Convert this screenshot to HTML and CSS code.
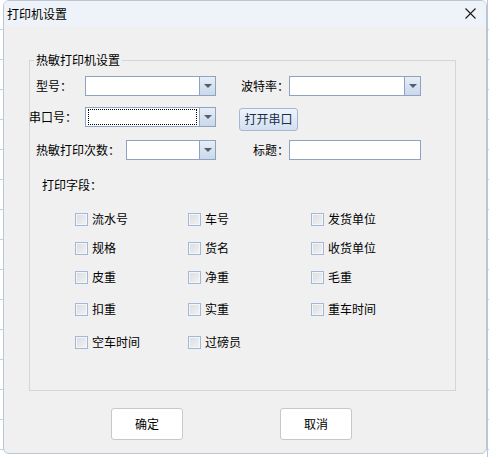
FILE: index.html
```html
<!DOCTYPE html>
<html lang="zh">
<head>
<meta charset="utf-8">
<title>打印机设置</title>
<link rel="stylesheet" href="styles.css">
</head>
<body>
<div class="win">
  <div class="titlebar">
    <span class="title">打印机设置</span>
    <svg class="close" width="11" height="11" viewBox="0 0 11 11"><path d="M0.5 0.5 L10.5 10.5 M10.5 0.5 L0.5 10.5" stroke="#1a1a1a" stroke-width="1.1" fill="none"/></svg>
  </div>
  <div class="content">
    <fieldset class="group">
      <legend>热敏打印机设置</legend>
      <div class="row r1">
        <div class="lcell"><span>型号：</span><div class="combo w131"><div class="field"></div><div class="arrow"><i></i></div></div></div>
        <div class="rcell"><span class="rlabel">波特率：</span><div class="combo w132"><div class="field"></div><div class="arrow"><i></i></div></div></div>
      </div>
      <div class="row r2">
        <div class="lcell wide"><span>串口号：</span><div class="combo w131 focus"><div class="field"><span class="dots"></span></div><div class="arrow"><i></i></div></div></div>
        <div class="rcell"><button class="open">打开串口</button></div>
      </div>
      <div class="row r3">
        <div class="lcell"><span>热敏打印次数：</span><div class="combo w90"><div class="field"></div><div class="arrow"><i></i></div></div></div>
        <div class="rcell"><span class="rlabel">标题：</span><div class="text w132"></div></div>
      </div>
      <div class="fields-label">打印字段：</div>
      <div class="cbrow c1">
        <label class="cb col1"><span class="box"></span>流水号</label>
        <label class="cb col2"><span class="box"></span>车号</label>
        <label class="cb"><span class="box"></span>发货单位</label>
      </div>
      <div class="cbrow c2">
        <label class="cb col1"><span class="box"></span>规格</label>
        <label class="cb col2"><span class="box"></span>货名</label>
        <label class="cb"><span class="box"></span>收货单位</label>
      </div>
      <div class="cbrow c3">
        <label class="cb col1"><span class="box"></span>皮重</label>
        <label class="cb col2"><span class="box"></span>净重</label>
        <label class="cb"><span class="box"></span>毛重</label>
      </div>
      <div class="cbrow c4">
        <label class="cb col1"><span class="box"></span>扣重</label>
        <label class="cb col2"><span class="box"></span>实重</label>
        <label class="cb"><span class="box"></span>重车时间</label>
      </div>
      <div class="cbrow c5">
        <label class="cb col1"><span class="box"></span>空车时间</label>
        <label class="cb col2"><span class="box"></span>过磅员</label>
      </div>
    </fieldset>
    <div class="actions">
      <button class="btn ok">确定</button>
      <button class="btn cancel">取消</button>
    </div>
  </div>
</div>
</body>
</html>
```
FILE: styles.css
```css
* { box-sizing: border-box; }
html, body { margin: 0; padding: 0; }
body {
  width: 489px;
  height: 457px;
  overflow: hidden;
  font-family: "Noto Sans CJK SC", "Noto Sans", sans-serif;
  font-size: 12px;
  line-height: 16px;
  color: #000;
  background:
    linear-gradient(to right, transparent 0 487px, #b7c6da 487px 488px, transparent 488px),
    repeating-linear-gradient(to bottom, #ffffff 0 29px, #c3d1e4 29px 30px);
}
.win {
  margin-left: 3px;
  width: 484px;
  height: 454px;
  border: 1px solid #bcc6d1;
  border-radius: 6px;
  background: #f0f0f0;
  overflow: hidden;
}
.titlebar {
  height: 25px;
  background: #edf3f8;
  display: flex;
  align-items: center;
  justify-content: space-between;
  padding: 0 10px 0 3px;
}
.title { font-size: 12px; line-height: 16px; }
.close { display: block; }
.content { padding: 0; }
.group {
  margin: 26px 0 0 25px;
  width: 427px;
  padding: 0 0 40px 0;
  border: 1px solid #d5d5d5;
  min-width: 0;
}
.group legend {
  margin-left: 4px;
  padding: 0 2px;
  line-height: 16px;
}
.row {
  display: flex;
  align-items: flex-start;
  height: 20px;
}
.r1 { margin-top: 8px; }
.r2 { margin-top: 11px; }
.r3 { margin-top: 13px; }
.lcell {
  margin-left: 6px;
  width: 180px;
  height: 20px;
  display: flex;
  align-items: center;
  justify-content: space-between;
}
.lcell.wide { margin-left: -1px; width: 187px; }
.rcell {
  margin-left: 23px;
  display: flex;
  align-items: center;
  height: 20px;
}
.rlabel { width: 50px; text-align: right; }
.combo {
  height: 20px;
  display: flex;
  border: 1px solid #8ea3bf;
  background: #fff;
}
.w131 { width: 131px; }
.w132 { width: 132px; }
.w90 { width: 90px; }
.combo .field { flex: 1; padding: 1px 2px 1px 2px; display: flex; }
.combo .dots { flex: 1; border: 1px dotted #000; }
.combo .arrow {
  width: 16px;
  border-left: 1px solid #8ea3bf;
  background: linear-gradient(to bottom, #e6edf6, #cad8ea);
  display: flex;
  align-items: center;
  justify-content: center;
}
.combo .arrow i {
  display: block;
  width: 0;
  height: 0;
  border-left: 4px solid transparent;
  border-right: 4px solid transparent;
  border-top: 4px solid #4e5f76;
}
.text {
  height: 20px;
  border: 1px solid #8ea3bf;
  background: #fff;
}
.open {
  margin-top: 4px;
  width: 59px;
  height: 23px;
  padding: 0;
  border: 1px solid #a5b8d1;
  border-radius: 3px;
  background: linear-gradient(to bottom, #eef4fb, #d3e0f0);
  font: inherit;
  color: #1c2f4a;
}
.fields-label { margin-top: 17px; padding-left: 12px; }
.cbrow {
  display: flex;
  height: 16px;
  padding-left: 45px;
}
.c1 { margin-top: 18px; }
.c2 { margin-top: 13px; }
.c3 { margin-top: 13px; }
.c4 { margin-top: 16px; }
.c5 { margin-top: 17px; }
.cb { display: flex; align-items: center; }
.col1 { width: 113px; }
.col2 { width: 123px; }
.box {
  width: 13px;
  height: 13px;
  margin-right: 4px;
  border: 1px solid #a3b8d6;
  background: linear-gradient(135deg, #d8dce2, #f3f3f3);
  box-shadow: inset 0 0 0 1px #f4f6f8;
}
.actions {
  display: flex;
  margin-top: 17px;
  padding-left: 107px;
  gap: 97px;
}
.btn {
  width: 72px;
  height: 32px;
  padding: 0;
  border: 1px solid #c8c8c8;
  border-radius: 3px;
  background: #fff;
  font: inherit;
  color: #000;
}
```
